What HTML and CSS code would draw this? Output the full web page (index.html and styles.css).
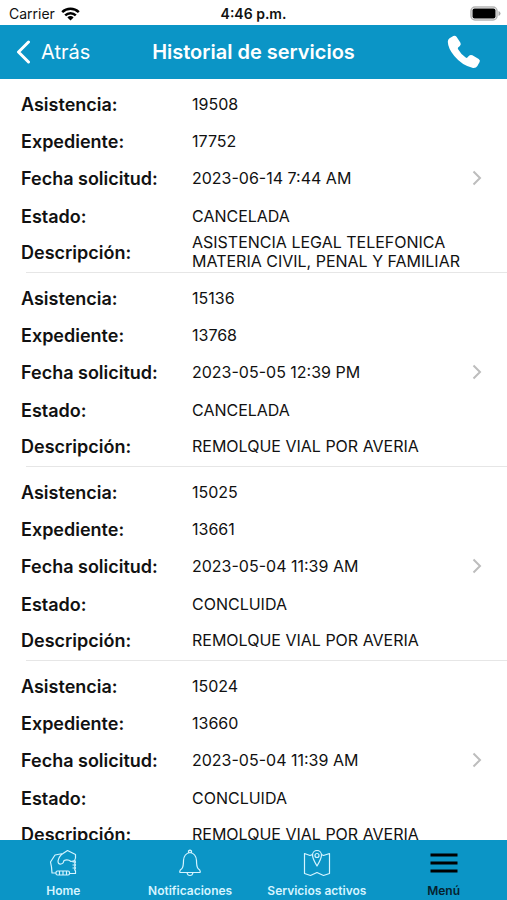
FILE: index.html
```
<!DOCTYPE html>
<html lang="es">
<head>
<meta charset="utf-8">
<meta name="viewport" content="width=device-width, initial-scale=1">
<title>Historial de servicios</title>
<link rel="stylesheet" href="styles.css">
</head>
<body>
<div class="status">
  <span class="carrier">Carrier
    <svg width="19" height="14" viewBox="0 0 19 14" fill="none" stroke="#000" stroke-width="2.5"><path d="M1.2 5.2a11.8 11.8 0 0 1 16.6 0M4.2 8.4a7.5 7.5 0 0 1 10.6 0"/><path d="M9.5 13.6 6.4 10.4a4.4 4.4 0 0 1 6.2 0z" fill="#000" stroke="none"/></svg>
  </span>
  <time>4:46 p.m.</time>
  <svg class="battery" width="31" height="15" viewBox="0 0 31 15"><rect x="1" y="1" width="26" height="13" rx="4" fill="#fff" stroke="#b5b5b5" stroke-width="1.5"/><rect x="2.5" y="2.5" width="23" height="10" rx="2" fill="#000"/><path d="M28.5 5v5q2-.8 2-2.5t-2-2.5z" fill="#a5a5a5"/></svg>
</div>
<header class="nav">
  <a class="back" href="#"><svg width="15" height="24" viewBox="0 0 15 24" fill="none" stroke="#fff" stroke-width="3" stroke-linecap="round" stroke-linejoin="round"><path d="M12.5 2 2.5 12l10 10"/></svg>Atrás</a>
  <h1>Historial de servicios</h1>
  <button class="call" type="button" aria-label="Llamar"><svg width="34" height="34" viewBox="0 0 34 34" fill="#fff"><path d="M2.5 3.3 6.3 1q1.9-1 3.2.8l3.8 5.6q1.2 1.900-.4 3.500l-1.800 1.700q-.6.700 0 1.700 2.900 5.100 7.600 8.300 1 .6 1.700-.1l1.600-1.700q1.500-1.500 3.400-.5l6.300 3.600q1.900 1.200.9 3.100l-2.200 4q-1.300 2.200-4.400 1.900Q15.400 31 7.300 21.100 1 13.400.8 6.800.8 4.500 2.500 3.300z"/></svg></button>
</header>
<main>
  <ul class="list">
    <li><a class="service" href="#"><dl>
      <dt>Asistencia:</dt><dd>19508</dd>
      <dt>Expediente:</dt><dd>17752</dd>
      <dt>Fecha solicitud:</dt><dd>2023-06-14 7:44 AM</dd>
      <dt>Estado:</dt><dd>CANCELADA</dd>
      <dt>Descripción:</dt><dd>ASISTENCIA LEGAL TELEFONICA MATERIA CIVIL, PENAL Y FAMILIAR</dd>
    </dl><svg class="chevron" width="10" height="16" viewBox="0 0 10 16"><path d="m1.500 1.500 6.500 6.500-6.500 6.500"/></svg></a></li>
    <li><a class="service" href="#"><dl>
      <dt>Asistencia:</dt><dd>15136</dd>
      <dt>Expediente:</dt><dd>13768</dd>
      <dt>Fecha solicitud:</dt><dd>2023-05-05 12:39 PM</dd>
      <dt>Estado:</dt><dd>CANCELADA</dd>
      <dt>Descripción:</dt><dd>REMOLQUE VIAL POR AVERIA</dd>
    </dl><svg class="chevron" width="10" height="16" viewBox="0 0 10 16"><path d="m1.500 1.500 6.500 6.500-6.500 6.500"/></svg></a></li>
    <li><a class="service" href="#"><dl>
      <dt>Asistencia:</dt><dd>15025</dd>
      <dt>Expediente:</dt><dd>13661</dd>
      <dt>Fecha solicitud:</dt><dd>2023-05-04 11:39 AM</dd>
      <dt>Estado:</dt><dd>CONCLUIDA</dd>
      <dt>Descripción:</dt><dd>REMOLQUE VIAL POR AVERIA</dd>
    </dl><svg class="chevron" width="10" height="16" viewBox="0 0 10 16"><path d="m1.500 1.500 6.500 6.500-6.500 6.500"/></svg></a></li>
    <li><a class="service" href="#"><dl>
      <dt>Asistencia:</dt><dd>15024</dd>
      <dt>Expediente:</dt><dd>13660</dd>
      <dt>Fecha solicitud:</dt><dd>2023-05-04 11:39 AM</dd>
      <dt>Estado:</dt><dd>CONCLUIDA</dd>
      <dt>Descripción:</dt><dd>REMOLQUE VIAL POR AVERIA</dd>
    </dl><svg class="chevron" width="10" height="16" viewBox="0 0 10 16"><path d="m1.500 1.500 6.500 6.500-6.500 6.500"/></svg></a></li>
  </ul>
</main>
<nav class="tabs">
  <a href="#"><svg width="28" height="28" viewBox="0 0 28 28"><path d="M7 24H3L2.500 18 1.500 13 6 6 14 4.500 18.500 1.500 26.500 5.500V9q-1.500 2 0 4-1.500 1.500 0 3-1.500 1.500 0 3-1.500 1.500 0 3v2.500H20.500M14 4.500Q10 7 9 12q0 3.500 3 3 2.500-.5 3-3.500 4-1.500 7 1l4-1M26.500 13H23.500M26.500 16H23.500M26.500 19H23.500"/><rect x="7" y="22" width="13.500" height="4" rx="1.500"/><path d="M10.500 22v4M14 22v4M17.500 22v4"/></svg>Home</a>
  <a href="#"><svg width="28" height="28" viewBox="0 0 28 28"><path d="M12.500 3.500V2q1.500-1.500 3 0v1.500M4 23.500q-1-2 2-4 1.500-2 1.500-8 .5-7 6.500-8 6 1 6.500 8 0 6 1.500 8 3 2 2 4zM11 23.500q.5 3 3 3t3-3"/></svg>Notificaciones</a>
  <a href="#"><svg width="28" height="28" viewBox="0 0 28 28"><path d="M9.500 5.500 7 6.500 1.500 4.500v20l6 2 6.500-3 6.500 3 6-2v-20L20.500 6.500l-2-1M14 17Q9.500 9.500 9.500 6a4.500 4.500 0 0 1 9 0q0 3.500-4.500 11z"/><circle cx="14" cy="6.500" r="2"/></svg>Servicios activos</a>
  <a class="active" href="#"><svg width="28" height="28" viewBox="0 0 28 28"><path d="M.5 6h27M.5 14h27M.5 22h27"/></svg>Menú</a>
</nav>
</body>
</html>
```
FILE: styles.css
```
* { box-sizing: border-box; }
body {
  margin: 0;
  height: 100vh;
  display: flex;
  flex-direction: column;
  overflow: hidden;
  background: #fff;
  color: #111;
  font-family: Inter, "Liberation Sans", sans-serif;
}
a { color: inherit; text-decoration: none; }
svg { display: block; flex: none; }
.status, .nav {
  display: grid;
  grid-template-columns: 1fr auto 1fr;
  align-items: center;
  flex: none;
}
.status {
  height: 25px;
  padding: 2px 6px 0;
  font-size: 14px;
}
.carrier { display: flex; align-items: center; gap: 6px; padding-left: 3px; }
.status time { font-weight: 600; }
.battery { justify-self: end; }
.nav {
  height: 54px;
  padding: 0 16px;
  background: #0b95c6;
  color: #fff;
}
.back { display: flex; align-items: center; gap: 10px; font-size: 20px; }
.nav h1 { margin: 0; font-size: 20px; font-weight: 600; }
.call {
  justify-self: end;
  margin: 0 10px 0 0;
  padding: 0;
  border: 0;
  background: none;
}
main { flex: 1; min-height: 0; overflow: hidden; }
.list { margin: 0; padding: 0; list-style: none; }
.list li::after {
  content: "";
  display: block;
  height: 1px;
  margin-left: 26px;
  background: #e6e6e6;
}
.service {
  display: flex;
  align-items: center;
  padding: 7px 25px 3px 21px;
}
.service dl {
  flex: 1;
  display: grid;
  grid-template-columns: 171px 1fr;
  grid-template-rows: repeat(3, 37px) 38px 34px;
  align-items: center;
  margin: 0;
}
.service dt { font-size: 18px; font-weight: 600; }
.service dd { margin: 0; font-size: 16px; line-height: 19px; }
.chevron { fill: none; stroke: #bdbdbd; stroke-width: 2; }
.tabs {
  flex: none;
  height: 60px;
  display: grid;
  grid-template-columns: repeat(4, 1fr);
  background: #0b95c6;
  color: #d5f4ff;
}
.tabs a {
  display: flex;
  flex-direction: column;
  align-items: center;
  gap: 6px;
  padding-top: 9px;
  font-size: 12px;
  line-height: 16px;
  font-weight: 600;
}
.tabs svg { fill: none; stroke: currentColor; stroke-width: 1.2; stroke-linejoin: round; }
.tabs .active { color: #06222e; }
.tabs .active svg { stroke: #000; stroke-width: 3; }
```
